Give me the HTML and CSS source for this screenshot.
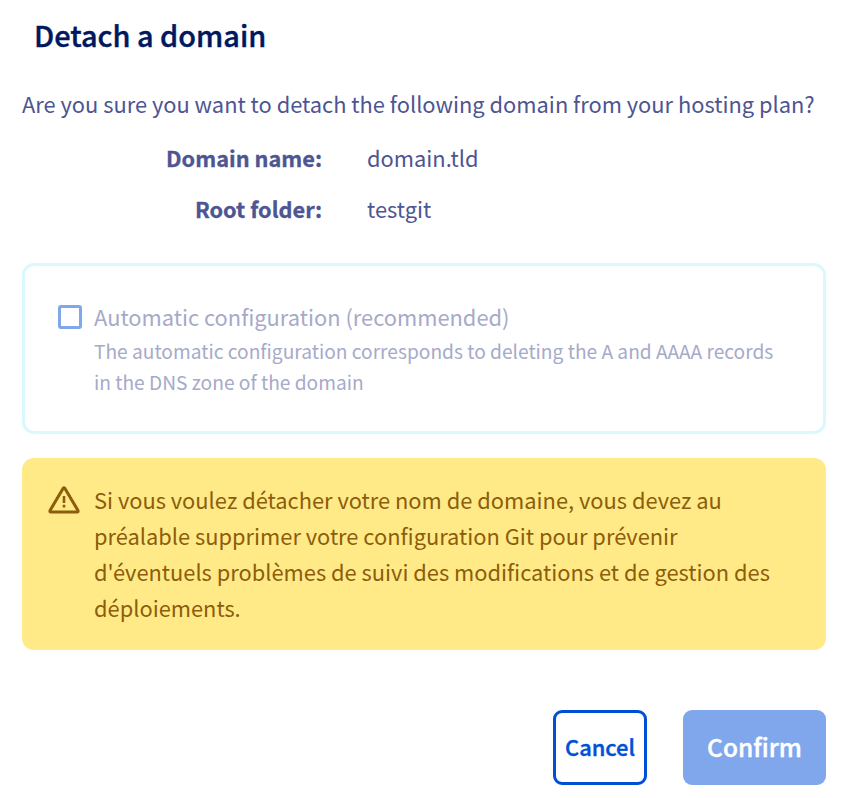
FILE: index.html
```html
<!DOCTYPE html>
<html lang="en">
<head>
<meta charset="utf-8">
<title>Detach a domain</title>
<link rel="stylesheet" href="styles.css">
</head>
<body>
<main class="modal">
  <h1 class="title">Detach a domain</h1>
  <p class="question">Are you sure you want to detach the following domain from your hosting plan?</p>
  <dl class="details">
    <dt>Domain name:</dt><dd>domain.tld</dd>
    <dt>Root folder:</dt><dd>testgit</dd>
  </dl>
  <section class="option">
    <span class="checkbox"></span>
    <div>
      <div class="option-label">Automatic configuration (recommended)</div>
      <div class="option-help">The automatic configuration corresponds to deleting the A and AAAA records<br>in the DNS zone of the domain</div>
    </div>
  </section>
  <section class="warning">
    <svg class="warning-icon" width="32" height="28" viewBox="0 0 32 28" fill="none" stroke="currentColor" stroke-linejoin="round"><path stroke-width="3" d="M15.2 2.3Q16 1.4 16.8 2.3L30 24.6Q30.4 26 29.2 26H2.8Q1.6 26 2 24.6Z"/><path stroke-width="2.6" d="M16 10V17M16 18.8v2.6"/></svg>
    <p class="warning-text">Si vous voulez détacher votre nom de domaine, vous devez au<br>préalable supprimer votre configuration Git pour prévenir<br>d'éventuels problèmes de suivi des modifications et de gestion des<br>déploiements.</p>
  </section>
  <footer class="actions">
    <button class="button cancel">Cancel</button>
    <button class="button confirm">Confirm</button>
  </footer>
</main>
</body>
</html>
```
FILE: styles.css
```css
* { box-sizing: border-box; }
body {
  margin: 0;
  background: #fff;
  color: #4d5592;
  font-family: "Noto Sans CJK SC", sans-serif;
  font-size: 21.85px;
  line-height: 36px;
  white-space: nowrap;
}
.modal { padding: 14px 26px 0 22px; }
.title {
  margin: 0 0 32px 12px;
  color: #00185e;
  font-size: 28.9px;
  font-weight: 500;
  line-height: 40px;
  -webkit-text-stroke: 0.4px currentColor;
}
.question { margin: 0; }
.details {
  display: grid;
  grid-template-columns: 300px 1fr;
  column-gap: 45px;
  row-gap: 15px;
  margin: 18px 0 36px;
}
.details dt {
  text-align: right;
  font-size: 21.75px;
  font-weight: 700;
  -webkit-text-stroke: 0.3px currentColor;
}
.details dd { margin: 0; }
.option {
  display: flex;
  gap: 12px;
  height: 171px;
  padding: 33px 33px 0;
  border: 3px solid #dbf8ff;
  border-radius: 12px;
  color: #a6aac9;
}
.checkbox {
  flex: none;
  width: 24px;
  height: 24px;
  margin-top: 6px;
  border: 3px solid #80a7eb;
  border-radius: 3px;
}
.option-help { margin-top: 1px; font-size: 19.17px; line-height: 31px; }
.warning {
  display: flex;
  gap: 14px;
  height: 192px;
  margin-top: 24px;
  padding: 24px 26px;
  border-radius: 12px;
  background: #ffea87;
  color: #8c5d0c;
}
.warning-icon { flex: none; margin-top: 4px; }
.warning-text { margin: 0; }
.actions {
  display: flex;
  justify-content: flex-end;
  gap: 36px;
  margin-top: 60px;
}
.button {
  height: 75px;
  padding: 0 0 2px;
  border: 0;
  border-radius: 9px;
  font-family: inherit;
  font-weight: 500;
  -webkit-text-stroke: 0.4px currentColor;
}
.cancel {
  width: 94px;
  padding-bottom: 3px;
  border: 3px solid #0050d7;
  background: #fff;
  color: #0050d7;
  font-size: 21.85px;
}
.confirm {
  width: 143px;
  background: #80a7eb;
  color: #fff;
  font-size: 24.5px;
}
```
